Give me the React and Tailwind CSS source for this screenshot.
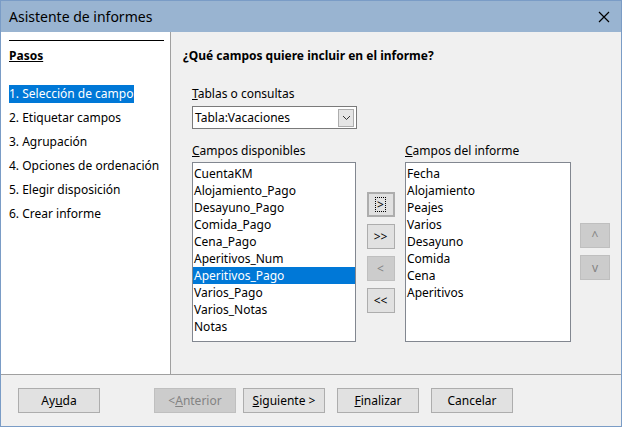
export default function App() {
  const left = ["CuentaKM","Alojamiento_Pago","Desayuno_Pago","Comida_Pago","Cena_Pago","Aperitivos_Num","Aperitivos_Pago","Varios_Pago","Varios_Notas","Notas"];
  const right = ["Fecha","Alojamiento","Peajes","Varios","Desayuno","Comida","Cena","Aperitivos"];
  const steps = ["1. Selección de campo","2. Etiquetar campos","3. Agrupación","4. Opciones de ordenación","5. Elegir disposición","6. Crear informe"];
  const btn = "h-[25px] border border-[#adadad] bg-[#e1e1e1] flex items-center justify-center text-[12px] text-black";
  const dis = "h-[25px] border border-[#bfbfbf] bg-[#cccccc] flex items-center justify-center text-[12px] text-[#838383]";
  return (
    <div className="w-[622px] h-[427px] flex flex-col border border-[#7a9cc6] bg-[#f0f0f0] overflow-hidden" style={{fontFamily:'"Noto Sans", sans-serif'}}>
      <div className="h-[31px] bg-[#99b4d1] flex items-center justify-between px-[8px] shrink-0">
        <span className="text-[14px] text-black">Asistente de informes</span>
        <svg width="12" height="12" viewBox="0 0 12 12" className="mr-[3px]"><path d="M1 1L11 11M11 1L1 11" stroke="#000" strokeWidth="1.2"/></svg>
      </div>
      <div className="flex h-[342px] shrink-0">
        <div className="w-[170px] bg-white border-r border-[#a0a0a0] pt-[8px] shrink-0">
          <div className="ml-[8px] w-[155px] border-t border-black"></div>
          <div className="ml-[8px] mt-[6px] text-[12px] font-bold underline">Pasos</div>
          <div className="mt-[20px] flex flex-col gap-[6px] text-[12px]">
            {steps.map((s,i)=>(
              <div key={s} className="pl-[8px] h-[18px] flex items-center"><span className={i===0?"bg-[#0078d7] text-white pr-[1px]":""}>{s}</span></div>
            ))}
          </div>
        </div>
        <div className="flex-1 pl-[12px] pt-[15px]">
          <div className="text-[12px] font-bold">¿Qué campos quiere incluir en el informe?</div>
          <div className="pl-[9px] mt-[20px]">
            <div className="text-[12px]"><u>T</u>ablas o consultas</div>
            <div className="mt-[3px] w-[165px] h-[23px] bg-white border border-[#7a7a7a] flex items-center justify-between pl-[2px] text-[12px]">
              <span>Tabla:Vacaciones</span>
              <div className="w-[16px] h-[18px] mr-[2px] border border-[#adadad] bg-[#e5e5e5] flex items-center justify-center">
                <svg width="9" height="6" viewBox="0 0 9 6"><path d="M1 1l3.5 3.5L8 1" stroke="#333" fill="none"/></svg>
              </div>
            </div>
            <div className="flex mt-[14px]">
              <div className="flex flex-col">
                <div className="text-[12px] h-[15px] leading-[15px]"><u>C</u>ampos disponibles</div>
                <div className="mt-[4px] w-[164px] h-[180px] bg-white border border-[#828790] pt-[2px] text-[12px]">
                  {left.map(s=>(<div key={s} className={"h-[17px] leading-[17px] px-[1px] "+(s==="Aperitivos_Pago"?"bg-[#0078d7] text-white":"")}>{s}</div>))}
                </div>
              </div>
              <div className="w-[49px] flex flex-col items-center pt-[49px] gap-[7px]">
                <div className={btn+" w-[28px] border-[#0078d7] border-2"}><span className="border border-dotted border-black px-[1px] leading-[13px]">&gt;</span></div>
                <div className={btn+" w-[28px]"}>&gt;&gt;</div>
                <div className={dis+" w-[28px]"}>&lt;</div>
                <div className={btn+" w-[28px]"}>&lt;&lt;</div>
              </div>
              <div className="flex flex-col">
                <div className="text-[12px] h-[15px] leading-[15px]"><u>C</u>ampos del informe</div>
                <div className="mt-[4px] w-[166px] h-[180px] bg-white border border-[#828790] pt-[2px] text-[12px]">
                  {right.map(s=>(<div key={s} className="h-[17px] leading-[17px] px-[1px]">{s}</div>))}
                </div>
              </div>
              <div className="pl-[9px] pt-[80px] flex flex-col gap-[7px]">
                <div className={dis+" w-[30px]"}>^</div>
                <div className={dis+" w-[30px]"}>v</div>
              </div>
            </div>
          </div>
        </div>
      </div>
      <div className="flex-1 border-t border-[#a0a0a0] flex items-center px-[17px]">
        <div className={btn+" w-[82px]"}>Ay<u>u</u>da</div>
        <div className={dis+" w-[82px] ml-[54px]"}>&lt; <u>A</u>nterior</div>
        <div className={btn+" w-[82px] ml-[7px]"}><u>S</u>iguiente &gt;</div>
        <div className={btn+" w-[82px] ml-[12px]"}><u>F</u>inalizar</div>
        <div className={btn+" w-[82px] ml-[12px]"}>Cancelar</div>
      </div>
    </div>
  );
}
